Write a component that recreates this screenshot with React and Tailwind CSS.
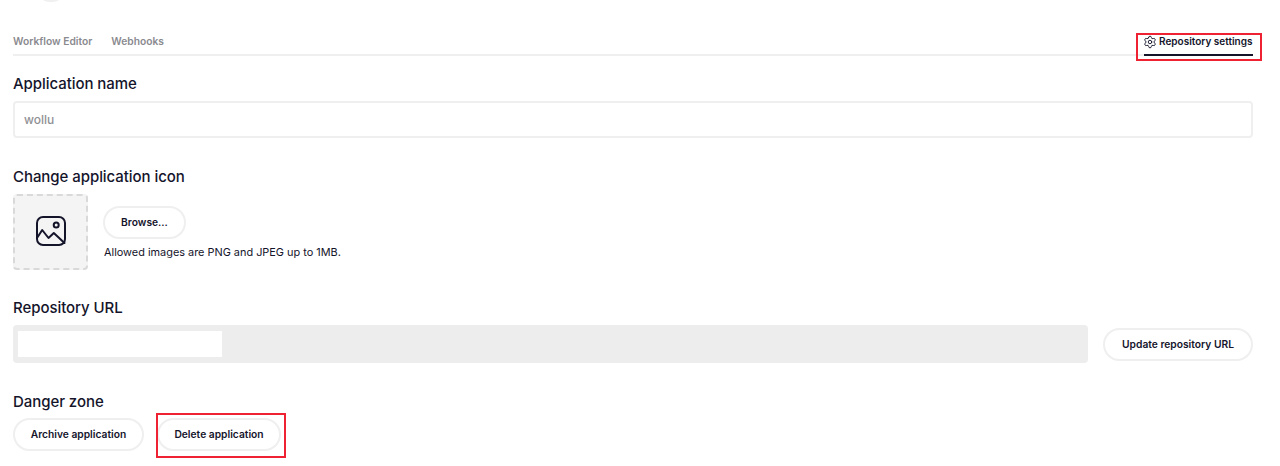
import { Settings } from "lucide-react";

function PillButton({ children, className = "" }) {
  return (
    <button className={`h-[33px] rounded-full border-2 border-[#efefef] bg-white pt-px text-[10.25px] font-semibold text-[#14142b] ${className}`}>
      {children}
    </button>
  );
}

function Heading({ children }) {
  return <h2 className="text-[15px] leading-5 font-medium tracking-[-0.004em] text-[#14142b]">{children}</h2>;
}

export default function App() {
  return (
    <main className="relative h-[466px] overflow-hidden bg-white pl-[13px] pr-[27px] font-['Inter',sans-serif]">
      {/* avatar cut off by the top of the page */}
      <div className="absolute left-[33px] top-[-38px] h-10 w-[36px] rounded-full bg-[#f0f0f0]" />

      <nav className="flex h-[56px] items-start justify-between border-b-2 border-[#efefef] pt-[34px]">
        <div className="flex gap-[19px] text-[10.25px] leading-[15px] font-semibold text-[#8a8a8f]">
          <span>Workflow Editor</span>
          <span>Webhooks</span>
        </div>
        <div className="flex h-[22px] w-[109px] items-start gap-[2px] whitespace-nowrap border-b-2 border-[#14142b] text-[10px] leading-[15px] font-semibold text-[#14142b]">
          <Settings size={14} strokeWidth={1.6} className="-ml-px mt-px shrink-0" />
          <span>Repository settings</span>
        </div>
      </nav>

      <section className="mt-[18px]">
        <Heading>Application name</Heading>
        <div className="mt-[7px] flex h-[37px] items-center rounded border-2 border-[#efefef] px-[9px] text-xs font-medium text-[#8f8f94]">
          wollu
        </div>
      </section>

      <section className="mt-[29px]">
        <Heading>Change application icon</Heading>
        <div className="mt-[7px] flex items-center gap-[15px]">
          <div className="flex h-[76px] w-[75px] items-center justify-center rounded border-2 border-dashed border-[#d9d9d9] bg-[#f4f4f4] pb-0.5">
            <svg width="32" height="32" viewBox="0 0 32 32" fill="none" stroke="#14142b" strokeWidth="2" strokeLinejoin="round" strokeLinecap="round">
              <rect x="2" y="2" width="28" height="28" rx="6" />
              <circle cx="21.2" cy="10" r="2.5" />
              <path d="M2 23l5.2-8 6.3 8 5.3-5 10.7 10" />
            </svg>
          </div>
          <div className="flex flex-col items-start pt-[2px]">
            <PillButton className="w-[83px]">Browse...</PillButton>
            <p className="mt-[6px] pl-px text-[10.9px] leading-[15px] text-[#14142b]">Allowed images are PNG and JPEG up to 1MB.</p>
          </div>
        </div>
      </section>

      <section className="mt-[28px]">
        <Heading>Repository URL</Heading>
        <div className="mt-[7px] flex items-center gap-[15px]">
          <div className="h-[38px] flex-1 rounded bg-[#ededed] py-[6px] pl-[5px]">
            <div className="h-[26px] w-[204px] bg-white" />
          </div>
          <PillButton className="w-[150px]">Update repository URL</PillButton>
        </div>
      </section>

      <section className="mt-[29px]">
        <Heading>Danger zone</Heading>
        <div className="mt-[6px] flex gap-[13px]">
          <PillButton className="w-[131px]">Archive application</PillButton>
          <PillButton className="w-[124px]">Delete application</PillButton>
        </div>
      </section>

      {/* red annotation boxes */}
      <div className="absolute left-[1136px] top-[33px] h-[28px] w-[126px] border-2 border-[#ee2233]" />
      <div className="absolute left-[156px] top-[413px] h-[45px] w-[130px] border-2 border-[#ee2233]" />
    </main>
  );
}
